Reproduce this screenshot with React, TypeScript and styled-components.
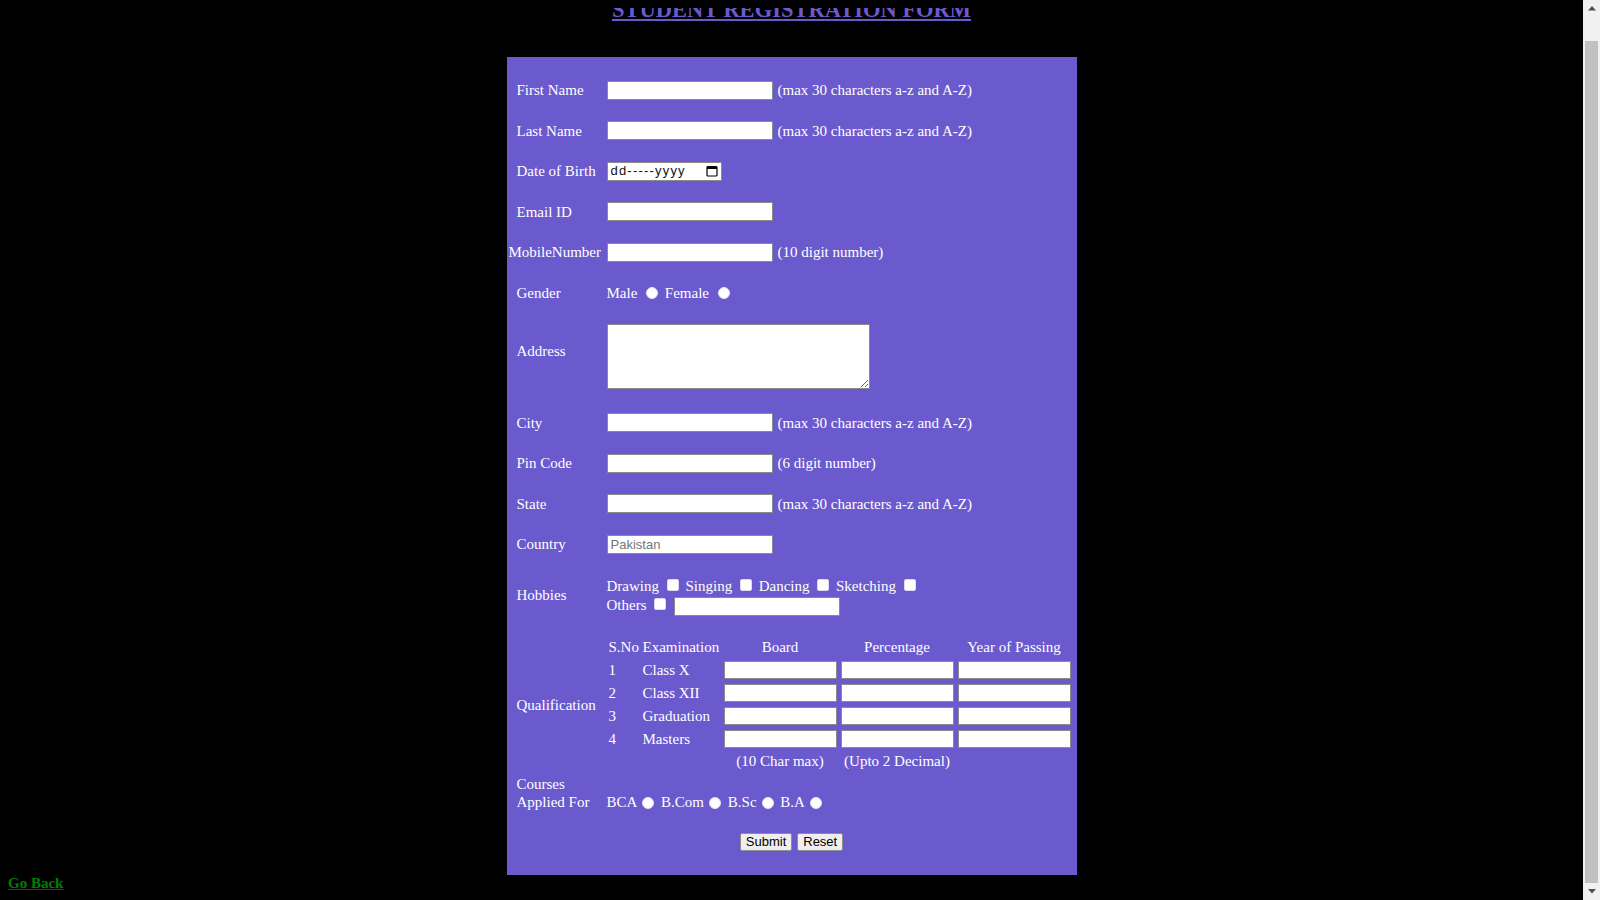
import React from "react";
import styled, { createGlobalStyle } from "styled-components";

const GlobalStyle = createGlobalStyle`
body {
    margin: 8px 25px 8px 8px;
    background: #000;
    font-family: "Liberation Serif", "Times New Roman", serif;
    font-size: 15px;
    color: #fff;
}
`;

const Title = styled.h2`
margin: -11px 0 34px;
font-size: 22.5px;
line-height: 26px;
font-weight: bold;
text-align: center;
color: #6a5acd;
text-decoration: underline;
`;

const FormBox = styled.form`
width: 570px;
margin: 0 auto;
box-sizing: border-box;
padding: 13px 0 24px;
background: #6a5acd;
`;

const Row = styled.div<{ $h?: number; $align?: string }>`
display: grid;
grid-template-columns: 100px 1fr;
align-items: ${(p) => p.$align || "center"};
min-height: ${(p) => (p.$h ? `${p.$h}px` : "auto")};
`;

const QualRow = styled(Row)`
padding: 11px 0 3px;
`;

const Label = styled.div<{ $pl?: number; $pb?: number }>`
padding-left: ${(p) => (p.$pl ?? 10)}px;
padding-bottom: ${(p) => p.$pb || 0}px;
white-space: nowrap;
line-height: 18px;
`;

const Field = styled.div<{ $lh?: number }>`
display: flex;
align-items: center;
line-height: ${(p) => p.$lh || 18}px;
`;

const Inline = styled.div<{ $lh?: number; $pt?: number }>`
line-height: ${(p) => p.$lh || 18}px;
padding-top: ${(p) => p.$pt || 0}px;
white-space: nowrap;
`;

const TextField = styled.input`
width: 166px;
height: 19px;
box-sizing: border-box;
border: 1px solid #8a8a8a;
padding: 1px 3px;
margin: 0;
background: #fff;
font-family: "Liberation Sans", Arial, sans-serif;
font-size: 13px;
vertical-align: middle;
&::placeholder {
    color: #757575;
}
`;

const Hint = styled.span`
margin-left: 5px;
`;

const DateField = styled.div`
display: inline-flex;
align-items: center;
justify-content: space-between;
width: 115px;
height: 19px;
box-sizing: border-box;
padding: 0 3px 0 3px;
border: 1px solid #8a8a8a;
background: #fff;
color: #111;
font-family: "Liberation Sans", Arial, sans-serif;
font-size: 13px;
letter-spacing: 1.2px;
`;

const AddressBox = styled.textarea`
display: block;
width: 263px;
height: 65px;
box-sizing: border-box;
margin: 0 0 3px;
border: 1px solid #8a8a8a;
background: #fff;
resize: both;
`;

const Radio = styled.input.attrs({ type: "radio" })`
appearance: none;
width: 12px;
height: 12px;
margin: 0 3px 0 5px;
border-radius: 50%;
background: #fff;
border: 1px solid #e4e2f3;
box-sizing: border-box;
vertical-align: middle;
position: relative;
top: -1px;
`;

const Check = styled.input.attrs({ type: "checkbox" })`
appearance: none;
width: 12px;
height: 12px;
margin: 0 3px 0 4px;
border-radius: 2px;
background: #fff;
border: 1px solid #dcd9f0;
box-sizing: border-box;
vertical-align: middle;
position: relative;
top: -2px;
`;

const OtherField = styled(TextField)`
margin-left: 5px;
`;

const QualGrid = styled.div`
display: grid;
grid-template-columns: 34px 81px 117px 117px 117px;
grid-template-rows: 21px repeat(4, 22px) 21px;
row-gap: 1px;
`;

const Cell = styled.div<{ $center?: boolean }>`
display: flex;
align-items: center;
justify-content: ${(p) => (p.$center ? "center" : "flex-start")};
padding: 0 2px;
white-space: nowrap;
`;

const CellInput = styled.input`
width: 113px;
height: 18px;
box-sizing: border-box;
margin: 0;
border: 1px solid #8a8a8a;
background: #fff;
`;

const ButtonRow = styled.div`
display: flex;
justify-content: center;
gap: 5px;
margin-top: 22px;
`;

const Button = styled.button`
height: 18px;
padding: 0 5px;
border: 1px solid #8f8f8f;
border-radius: 2px;
background: #efefef;
color: #000;
font-family: "Liberation Sans", Arial, sans-serif;
font-size: 13px;
line-height: 16px;
`;

const GoBack = styled.a`
display: inline-block;
color: #008000;
font-weight: bold;
line-height: 17px;
text-decoration: underline;
text-decoration-color: #551a8b;
`;

// window scrollbar, drawn since the headless page has none
const ScrollBar = styled.div`
position: fixed;
top: 0;
right: 0;
width: 17px;
height: 100vh;
display: flex;
flex-direction: column;
background: #f1f1f1;
`;

const ScrollArrow = styled.div`
height: 17px;
display: flex;
align-items: center;
justify-content: center;
`;

const ScrollTrack = styled.div`
flex: 1;
display: flex;
padding: 24px 2px 0;
`;

const ScrollThumb = styled.div`
flex: 1;
background: #c1c1c1;
`;

const Arrow = ({ down }: { down?: boolean }) => (
    <svg width="8" height="5" viewBox="0 0 8 5">
        <path d={down ? "M0 0h8L4 4.5z" : "M0 4.5h8L4 0z"} fill="#505050" />
    </svg>
);

const CalendarIcon = () => (
    <svg width="12" height="12" viewBox="0 0 12 12" fill="none">
        <rect x="1" y="1.5" width="10" height="9.5" rx="1" stroke="#000" strokeWidth="1.2" />
        <rect x="1" y="1.5" width="10" height="2.5" fill="#000" />
    </svg>
);

const qualifications = ["Class X", "Class XII", "Graduation", "Masters"];

const TextRow = ({ label, hint, pl }: { label: string; hint?: string; pl?: number }) => (
    <Row $h={40.5}>
        <Label $pl={pl}>{label}</Label>
        <Field>
            <TextField type="text" />
            {hint && <Hint>{hint}</Hint>}
        </Field>
    </Row>
);

export default function App() {
    return (
        <>
            <GlobalStyle />
            <Title>STUDENT REGISTRATION FORM</Title>
            <FormBox onSubmit={(e) => e.preventDefault()}>
                <TextRow label="First Name" hint="(max 30 characters a-z and A-Z)" />
                <TextRow label="Last Name" hint="(max 30 characters a-z and A-Z)" />
                <Row $h={40.5}>
                    <Label>Date of Birth</Label>
                    <Field>
                        <DateField>
                            <span>dd-----yyyy</span>
                            <CalendarIcon />
                        </DateField>
                    </Field>
                </Row>
                <TextRow label="Email ID" />
                <TextRow label="MobileNumber" hint="(10 digit number)" pl={2} />
                <Row $h={40.5}>
                    <Label>Gender</Label>
                    <Inline>
                        Male <Radio name="gender" /> Female <Radio name="gender" />
                    </Inline>
                </Row>
                <Row $h={89.5}>
                    <Label $pb={14}>Address</Label>
                    <Field>
                        <AddressBox />
                    </Field>
                </Row>
                <TextRow label="City" hint="(max 30 characters a-z and A-Z)" />
                <TextRow label="Pin Code" hint="(6 digit number)" />
                <TextRow label="State" hint="(max 30 characters a-z and A-Z)" />
                <Row $h={40.5}>
                    <Label>Country</Label>
                    <Field>
                        <TextField type="text" placeholder="Pakistan" />
                    </Field>
                </Row>
                <Row $h={61.5}>
                    <Label>Hobbies</Label>
                    <Inline $lh={19} $pt={2}>
                        Drawing <Check /> Singing <Check /> Dancing <Check /> Sketching <Check />
                        <br />
                        Others <Check />
                        <OtherField type="text" />
                    </Inline>
                </Row>
                <QualRow>
                    <Label>Qualification</Label>
                    <QualGrid>
                        <Cell>S.No</Cell>
                        <Cell>Examination</Cell>
                        <Cell $center>Board</Cell>
                        <Cell $center>Percentage</Cell>
                        <Cell $center>Year of Passing</Cell>
                        {qualifications.map((q, i) => (
                            <React.Fragment key={q}>
                                <Cell>{i + 1}</Cell>
                                <Cell>{q}</Cell>
                                <Cell $center>
                                    <CellInput type="text" />
                                </Cell>
                                <Cell $center>
                                    <CellInput type="text" />
                                </Cell>
                                <Cell $center>
                                    <CellInput type="text" />
                                </Cell>
                            </React.Fragment>
                        ))}
                        <Cell />
                        <Cell />
                        <Cell $center>(10 Char max)</Cell>
                        <Cell $center>(Upto 2 Decimal)</Cell>
                        <Cell />
                    </QualGrid>
                </QualRow>
                <Row $align="end">
                    <Label>
                        Courses
                        <br />
                        Applied For
                    </Label>
                    <Inline>
                        BCA<Radio name="course" /> B.Com<Radio name="course" /> B.Sc<Radio name="course" /> B.A
                        <Radio name="course" />
                    </Inline>
                </Row>
                <ButtonRow>
                    <Button type="submit">Submit</Button>
                    <Button type="reset">Reset</Button>
                </ButtonRow>
            </FormBox>
            <GoBack href="#">Go Back</GoBack>
            <ScrollBar>
                <ScrollArrow>
                    <Arrow />
                </ScrollArrow>
                <ScrollTrack>
                    <ScrollThumb />
                </ScrollTrack>
                <ScrollArrow>
                    <Arrow down />
                </ScrollArrow>
            </ScrollBar>
        </>
    );
}
